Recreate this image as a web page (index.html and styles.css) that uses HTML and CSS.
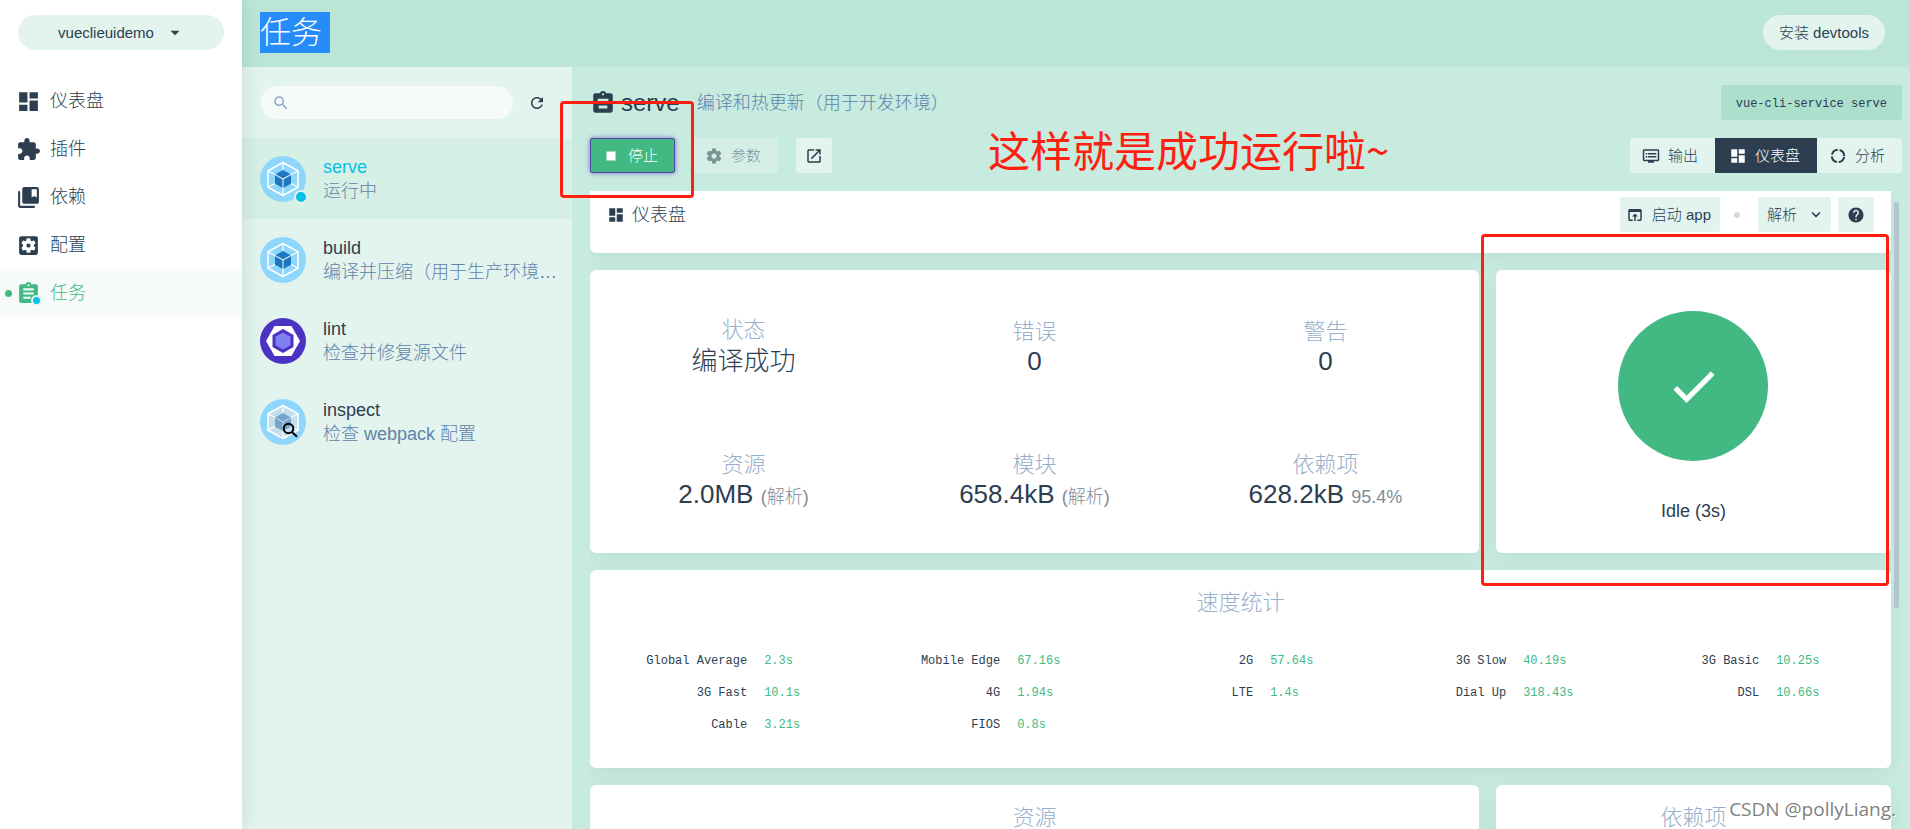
FILE: index.html
```html
<!DOCTYPE html>
<html lang="zh-CN">
<head>
<meta charset="utf-8">
<title>任务 - vueclieuidemo</title>
<link rel="stylesheet" href="styles.css">
</head>
<body>
<svg class="sprite" aria-hidden="true">
  <symbol id="i-dashboard" viewBox="0 0 24 24"><path d="M3 13h8V3H3v10zm0 8h8v-6H3v6zm10 0h8V11h-8v10zm0-18v6h8V3h-8z"/></symbol>
  <symbol id="i-plugin" viewBox="0 0 24 24"><path d="M20.5 11H19V7c0-1.1-.9-2-2-2h-4V3.5C13 2.12 11.88 1 10.5 1S8 2.12 8 3.5V5H4c-1.1 0-1.99.9-1.99 2v3.8H3.5c1.49 0 2.7 1.21 2.7 2.7s-1.21 2.7-2.7 2.7H2V20c0 1.1.9 2 2 2h3.8v-1.5c0-1.49 1.21-2.7 2.7-2.7 1.49 0 2.7 1.21 2.7 2.7V22H17c1.1 0 2-.9 2-2v-4h1.5c1.38 0 2.5-1.12 2.5-2.5S21.88 11 20.5 11z"/></symbol>
  <symbol id="i-deps" viewBox="0 0 24 24"><path d="M4 6H2v14c0 1.1.9 2 2 2h14v-2H4V6z"/><path d="M20 2H8c-1.1 0-2 .9-2 2v12c0 1.1.9 2 2 2h12c1.1 0 2-.9 2-2V4c0-1.1-.9-2-2-2zm0 10l-2.5-1.5L15 12V4h5v8z"/></symbol>
  <symbol id="i-config" viewBox="0 0 24 24"><path d="M12 10c-1.1 0-2 .9-2 2s.9 2 2 2 2-.9 2-2-.9-2-2-2zm7-7H5c-1.11 0-2 .9-2 2v14c0 1.1.89 2 2 2h14c1.11 0 2-.9 2-2V5c0-1.1-.89-2-2-2zm-1.75 9c0 .23-.02.46-.05.68l1.48 1.16c.13.11.17.3.08.45l-1.4 2.42c-.09.15-.27.21-.43.15l-1.74-.7c-.36.28-.76.51-1.18.69l-.26 1.85c-.03.17-.18.3-.35.3h-2.8c-.17 0-.32-.13-.35-.29l-.26-1.85c-.43-.18-.82-.41-1.18-.69l-1.74.7c-.16.06-.34 0-.43-.15l-1.4-2.42c-.09-.15-.05-.34.08-.45l1.48-1.16c-.03-.23-.05-.46-.05-.69 0-.23.02-.46.05-.68l-1.48-1.16c-.13-.11-.17-.3-.08-.45l1.4-2.42c.09-.15.27-.21.43-.15l1.74.7c.36-.28.76-.51 1.18-.69l.26-1.85c.03-.17.18-.3.35-.3h2.8c.17 0 .32.13.35.29l.26 1.85c.43.18.82.41 1.18.69l1.74-.7c.16-.06.34 0 .43.15l1.4 2.42c.09.15.05.34-.08.45l-1.48 1.16c.03.23.05.46.05.69z"/></symbol>
  <symbol id="i-task" viewBox="0 0 24 24"><path d="M19 3h-4.18C14.4 1.84 13.3 1 12 1c-1.3 0-2.4.84-2.82 2H5c-1.1 0-2 .9-2 2v14c0 1.1.9 2 2 2h14c1.1 0 2-.9 2-2V5c0-1.1-.9-2-2-2zm-7 0c.55 0 1 .45 1 1s-.45 1-1 1-1-.45-1-1 .45-1 1-1zm2 14H7v-2h7v2zm3-4H7v-2h10v2zm0-4H7V7h10v2z"/></symbol>
  <symbol id="i-tasktitle" viewBox="0 0 24 24"><path d="M19 3h-4.18C14.4 1.84 13.3 1 12 1c-1.3 0-2.4.84-2.82 2H5c-1.1 0-2 .9-2 2v14c0 1.1.9 2 2 2h14c1.1 0 2-.9 2-2V5c0-1.1-.9-2-2-2zm-7 0c.55 0 1 .45 1 1s-.45 1-1 1-1-.45-1-1 .45-1 1-1zm4 14H8v-2.6h8V17zm1-6.5H7V8h10v2.5z"/></symbol>
  <symbol id="i-gear" viewBox="0 0 24 24"><path d="M19.43 12.98c.04-.32.07-.64.07-.98s-.03-.66-.07-.98l2.11-1.65c.19-.15.24-.42.12-.64l-2-3.46c-.12-.22-.39-.3-.61-.22l-2.49 1c-.52-.4-1.08-.73-1.69-.98l-.38-2.65C14.46 2.18 14.25 2 14 2h-4c-.25 0-.46.18-.49.42l-.38 2.65c-.61.25-1.17.59-1.69.98l-2.49-1c-.23-.09-.49 0-.61.22l-2 3.46c-.13.22-.07.49.12.64l2.11 1.65c-.04.32-.07.65-.07.98s.03.66.07.98l-2.11 1.65c-.19.15-.24.42-.12.64l2 3.46c.12.22.39.3.61.22l2.49-1c.52.4 1.08.73 1.69.98l.38 2.65c.03.24.24.42.49.42h4c.25 0 .46-.18.49-.42l.38-2.65c.61-.25 1.17-.59 1.69-.98l2.49 1c.23.09.49 0 .61-.22l2-3.46c.12-.22.07-.49-.12-.64l-2.11-1.65zM12 15.5c-1.93 0-3.5-1.57-3.5-3.5s1.57-3.5 3.5-3.5 3.5 1.57 3.5 3.5-1.57 3.5-3.5 3.5z"/></symbol>
  <symbol id="i-stop" viewBox="0 0 24 24"><path d="M6 6h12v12H6z"/></symbol>
  <symbol id="i-open" viewBox="0 0 24 24"><path d="M19 19H5V5h7V3H5c-1.11 0-2 .9-2 2v14c0 1.1.89 2 2 2h14c1.1 0 2-.9 2-2v-7h-2v7zM14 3v2h3.59l-9.83 9.83 1.41 1.41L19 6.41V10h2V3h-7z"/></symbol>
  <symbol id="i-output" viewBox="0 0 24 24"><path d="M21 3H3c-1.1 0-2 .9-2 2v12c0 1.1.9 2 2 2h5v2h8v-2h5c1.1 0 1.99-.9 1.99-2L23 5c0-1.1-.9-2-2-2zm0 14H3V5h18v12zm-2-9H8v2h11V8zm0 4H8v2h11v-2zM7 8H5v2h2V8zm0 4H5v2h2v-2z"/></symbol>
  <symbol id="i-analyze" viewBox="0 0 24 24"><circle cx="12" cy="12" r="8.2" fill="none" stroke="currentColor" stroke-width="2.7" stroke-dasharray="10.4 2.48" stroke-dashoffset="-1.24"/></symbol>
  <symbol id="i-browser" viewBox="0 0 24 24"><path d="M19 4H5c-1.11 0-2 .9-2 2v12c0 1.1.89 2 2 2h4v-2H5V8h14v10h-4v2h4c1.1 0 2-.9 2-2V6c0-1.1-.89-2-2-2zm-7 6l-4 4h3v6h2v-6h3l-4-4z"/></symbol>
  <symbol id="i-help" viewBox="0 0 24 24"><path d="M12 2C6.48 2 2 6.48 2 12s4.48 10 10 10 10-4.48 10-10S17.52 2 12 2zm1 17h-2v-2h2v2zm2.07-7.75l-.9.92C13.45 12.9 13 13.5 13 15h-2v-.5c0-1.1.45-2.1 1.17-2.83l1.24-1.26c.37-.36.59-.86.59-1.41 0-1.1-.9-2-2-2s-2 .9-2 2H8c0-2.21 1.79-4 4-4s4 1.79 4 4c0 .88-.36 1.68-.93 2.25z"/></symbol>
  <symbol id="i-chevron" viewBox="0 0 24 24"><path d="M7.41 7.84L12 12.42l4.59-4.58L18 9.25l-6 6-6-6z"/></symbol>
  <symbol id="i-caret" viewBox="0 0 24 24"><path d="M6 9l6 6 6-6z"/></symbol>
  <symbol id="i-search" viewBox="0 0 24 24"><path d="M15.5 14h-.79l-.28-.27C15.41 12.59 16 11.11 16 9.5 16 5.91 13.09 3 9.5 3S3 5.91 3 9.5 5.91 16 9.5 16c1.61 0 3.09-.59 4.23-1.57l.27.28v.79l5 4.99L20.49 19l-4.99-5zm-6 0C7.01 14 5 11.99 5 9.5S7.01 5 9.5 5 14 7.01 14 9.5 11.99 14 9.5 14z"/></symbol>
  <symbol id="i-refresh" viewBox="0 0 24 24"><path d="M17.65 6.35C16.2 4.9 14.21 4 12 4c-4.42 0-7.99 3.58-7.99 8s3.57 8 7.99 8c3.73 0 6.84-2.55 7.73-6h-2.08c-.82 2.33-3.04 4-5.65 4-3.31 0-6-2.69-6-6s2.69-6 6-6c1.66 0 3.14.69 4.22 1.78L13 11h7V4l-2.35 2.35z"/></symbol>
  <symbol id="i-check" viewBox="0 0 24 24"><path stroke="currentColor" stroke-width=".35" d="M9 16.17L4.83 12l-1.42 1.41L9 19 21 7l-1.41-1.41z"/></symbol>
  <symbol id="l-webpack" viewBox="0 0 46 46">
    <circle cx="23" cy="23" r="23" fill="#8ed6fb"/>
    <g fill="none" stroke="#fff">
      <path stroke-width="1.6" d="M23 6.5l15 8.2v16.6L23 39.5 8 31.3V14.7z"/>
      <path stroke-width="1.2" d="M23 6.5V14M38 14.7L31 18.5M38 31.3L31 27.5M23 39.5V32M8 31.3L15 27.5M8 14.7L15 18.5"/>
    </g>
    <path fill="#1c78c0" d="M23 14l8 4.5v9.2L23 32l-8-4.3v-9.2z"/>
    <path fill="none" stroke="#d5ecf9" stroke-width="1.1" d="M15 18.5l8 4.5 8-4.5M23 23v9"/>
  </symbol>
  <symbol id="l-eslint" viewBox="0 0 46 46">
    <circle cx="23" cy="23" r="23" fill="#4b32c3"/>
    <path fill="#fff" d="M14.5 8h17L40 23l-8.5 15h-17L6 23z"/>
    <path fill="#4b32c3" d="M23 11l10.5 6v12L23 35l-10.5-6V17z"/>
    <path fill="#8080f2" d="M23 14.5l7.5 4.2v8.6L23 31.5l-7.5-4.2v-8.6z"/>
  </symbol>
  <symbol id="l-inspect" viewBox="0 0 46 46">
    <circle cx="23" cy="23" r="23" fill="#8ed6fb"/>
    <path fill="#c4dfec" stroke="#fff" stroke-width="1.6" d="M23 6.5l15 8.2v16.6L23 39.5 8 31.3V14.7z"/>
    <path fill="none" stroke="#fff" stroke-width="1.2" d="M23 6.5V14M38 14.7L31 18.5M38 31.3L31 27.5M23 39.5V32M8 31.3L15 27.5M8 14.7L15 18.5"/>
    <path fill="#76a3c8" d="M23 14l8 4.5v9.2L23 32l-8-4.3v-9.2z"/>
    <path fill="none" stroke="#c4dfec" d="M15 18.5l8 4.5 8-4.5M23 23v9"/>
    <g fill="none" stroke="#000" stroke-width="2"><circle cx="28.5" cy="29.5" r="4.8"/><path d="M32 33l5 4.8"/></g>
  </symbol>
</svg>

<div class="app">
  <aside class="sidebar">
    <button class="pill project">vueclieuidemo <svg class="icon s18"><use href="#i-caret"/></svg></button>
    <nav class="nav">
      <a href="#" class="nav-item"><svg class="icon s24"><use href="#i-dashboard"/></svg>仪表盘</a>
      <a href="#" class="nav-item"><svg class="icon s24"><use href="#i-plugin"/></svg>插件</a>
      <a href="#" class="nav-item"><svg class="icon s24"><use href="#i-deps"/></svg>依赖</a>
      <a href="#" class="nav-item"><svg class="icon s24"><use href="#i-config"/></svg>配置</a>
      <a href="#" class="nav-item active"><span class="nav-icon"><svg class="icon s24"><use href="#i-task"/></svg><i class="badge small"></i></span>任务</a>
    </nav>
  </aside>

  <div class="page">
    <header class="topbar">
      <h1 class="page-title"><span class="selected-text">任务</span></h1>
      <button class="pill">安装 devtools</button>
    </header>
    <div class="body">
      <section class="tasks">
        <div class="search-row">
          <label class="search"><svg class="icon s18"><use href="#i-search"/></svg><input type="text" aria-label="搜索任务"></label>
          <button class="refresh" aria-label="刷新"><svg class="icon s18"><use href="#i-refresh"/></svg></button>
        </div>
        <a href="#" class="task selected"><span class="logo"><svg><use href="#l-webpack"/></svg><i class="badge"></i></span><span class="task-text"><b>serve</b><span>运行中</span></span></a>
        <a href="#" class="task"><span class="logo"><svg><use href="#l-webpack"/></svg></span><span class="task-text"><b>build</b><span>编译并压缩（用于生产环境…</span></span></a>
        <a href="#" class="task"><span class="logo"><svg><use href="#l-eslint"/></svg></span><span class="task-text"><b>lint</b><span>检查并修复源文件</span></span></a>
        <a href="#" class="task"><span class="logo"><svg><use href="#l-inspect"/></svg></span><span class="task-text"><b>inspect</b><span>检查 webpack 配置</span></span></a>
      </section>

      <main class="content">
        <div class="task-head">
          <svg class="icon s26"><use href="#i-tasktitle"/></svg>
          <h2>serve</h2>
          <span class="desc">编译和热更新（用于开发环境）</span>
          <code class="command">vue-cli-service serve</code>
        </div>
        <div class="toolbar">
          <button class="btn stop"><svg class="icon s18"><use href="#i-stop"/></svg>停止</button>
          <button class="btn" disabled><svg class="icon s18"><use href="#i-gear"/></svg>参数</button>
          <button class="btn square" aria-label="打开"><svg class="icon s18"><use href="#i-open"/></svg></button>
          <div class="tabs">
            <button class="btn"><svg class="icon s18"><use href="#i-output"/></svg>输出</button>
            <button class="btn current"><svg class="icon s18"><use href="#i-dashboard"/></svg>仪表盘</button>
            <button class="btn"><svg class="icon s18"><use href="#i-analyze"/></svg>分析</button>
          </div>
        </div>

        <div class="scroller">
          <div class="dashboard">
            <div class="dash-bar">
              <svg class="icon s18"><use href="#i-dashboard"/></svg>
              <h3>仪表盘</h3>
              <button class="btn launch"><svg class="icon s18"><use href="#i-browser"/></svg>启动 app</button>
              <i class="separator"></i>
              <button class="btn dropdown">解析<svg class="icon s18"><use href="#i-chevron"/></svg></button>
              <button class="btn square help" aria-label="帮助"><svg class="icon s18"><use href="#i-help"/></svg></button>
            </div>
            <section class="card stats">
              <div class="stat"><h4>状态</h4><p class="tall">编译成功</p></div>
              <div class="stat"><h4>错误</h4><p>0</p></div>
              <div class="stat"><h4>警告</h4><p>0</p></div>
              <div class="stat"><h4>资源</h4><p>2.0MB <small>(解析)</small></p></div>
              <div class="stat"><h4>模块</h4><p>658.4kB <small>(解析)</small></p></div>
              <div class="stat"><h4>依赖项</h4><p>628.2kB <small>95.4%</small></p></div>
            </section>
            <section class="card progress">
              <div class="disc"><svg class="icon"><use href="#i-check"/></svg></div>
              <p>Idle (3s)</p>
            </section>
            <section class="card wide">
              <h4>速度统计</h4>
              <dl class="speeds">
                <div><dt>Global Average</dt><dd>2.3s</dd></div>
                <div><dt>Mobile Edge</dt><dd>67.16s</dd></div>
                <div><dt>2G</dt><dd>57.64s</dd></div>
                <div><dt>3G Slow</dt><dd>40.19s</dd></div>
                <div><dt>3G Basic</dt><dd>10.25s</dd></div>
                <div><dt>3G Fast</dt><dd>10.1s</dd></div>
                <div><dt>4G</dt><dd>1.94s</dd></div>
                <div><dt>LTE</dt><dd>1.4s</dd></div>
                <div><dt>Dial Up</dt><dd>318.43s</dd></div>
                <div><dt>DSL</dt><dd>10.66s</dd></div>
                <div><dt>Cable</dt><dd>3.21s</dd></div>
                <div><dt>FIOS</dt><dd>0.8s</dd></div>
              </dl>
            </section>
            <section class="card list"><h4>资源</h4></section>
            <section class="card list"><h4>依赖项</h4></section>
          </div>
          <i class="scroll-thumb"></i>
        </div>
      </main>
    </div>
  </div>

  <div class="mark mark-stop"></div>
  <div class="mark mark-idle"></div>
  <p class="note">这样就是成功运行啦~</p>
  <p class="watermark">CSDN @pollyLiang.</p>
</div>
</body>
</html>
```
FILE: styles.css
```css
* { box-sizing: border-box; }

body, h1, h2, h3, h4, p, dl, dd { margin: 0; font-weight: 300; }

body {
  color: #2c3e50;
  font-family: "Liberation Sans", "Noto Sans CJK SC", sans-serif;
  font-size: 18px;
  line-height: 24px;
}

a { color: inherit; text-decoration: none; }
button, input { font: inherit; color: inherit; border: 0; padding: 0; }

.sprite { position: absolute; width: 0; height: 0; }
.icon { display: block; flex: none; fill: currentColor; }
.s18 { width: 18px; height: 18px; }
.s24 { width: 25px; height: 25px; }
.s26 { width: 26px; height: 26px; }

.app {
  position: relative;
  display: flex;
  height: 100vh;
  overflow: hidden;
  background: #c7ebdf;
}

/* Sidebar */
.sidebar {
  position: relative;
  z-index: 1;
  flex: none;
  width: 242px;
  padding-top: 15px;
  background: #fff;
  box-shadow: 0 0 20px rgba(0, 0, 0, .12);
}

.pill {
  height: 35px;
  padding: 0 16px;
  border-radius: 18px;
  background: #e3f4ee;
  font-size: 15px;
}

.project {
  display: flex;
  align-items: center;
  justify-content: center;
  gap: 12px;
  width: 206px;
  margin: 0 18px 27px;
}

.nav-item {
  position: relative;
  display: flex;
  align-items: center;
  gap: 9px;
  height: 48px;
  padding-left: 16px;
}
.nav-item.active { background: #f6fbfa; color: #42b983; }
.nav-item.active::before {
  content: "";
  position: absolute;
  left: 5px;
  width: 7px;
  height: 7px;
  border-radius: 50%;
  background: #42b983;
}
.nav-icon { position: relative; }

.badge {
  position: absolute;
  right: -2px;
  bottom: -2px;
  width: 14px;
  height: 14px;
  border: 2px solid #e3f4ee;
  border-radius: 50%;
  background: #03c2e6;
}
.badge.small { width: 11px; height: 11px; right: -1px; bottom: 0; }

/* Top bar */
.page { flex: 1; min-width: 0; display: flex; flex-direction: column; }
.topbar {
  flex: none;
  display: flex;
  align-items: center;
  justify-content: space-between;
  height: 67px;
  padding: 0 25px 2px 18px;
  background: #bbe6d6;
}
.page-title { font-size: 31px; line-height: 41px; }
.selected-text {
  display: block;
  padding-right: 8px;
  background: #268bfb;
  color: #fff;
}
.body { flex: 1; min-height: 0; display: flex; }

/* Task list */
.tasks { flex: none; width: 330px; background: #e3f4ee; }
.search-row {
  display: flex;
  align-items: center;
  gap: 15px;
  height: 71px;
  padding: 0 26px 0 19px;
}
.search {
  flex: 1;
  min-width: 0;
  display: flex;
  align-items: center;
  height: 33px;
  padding: 0 11px;
  border-radius: 17px;
  background: #f6fbfa;
  color: #8ba7c7;
}
.search input { flex: 1; min-width: 0; background: none; outline: 0; }
.refresh { background: none; }

.task {
  display: flex;
  align-items: center;
  gap: 17px;
  height: 81px;
  padding: 0 12px 0 18px;
}
.task.selected { background: #d7f0e6; }
.task.selected b { color: #03c2e6; }
.logo { position: relative; flex: none; width: 46px; height: 46px; }
.logo svg { display: block; width: 46px; height: 46px; }
.task-text { flex: 1; min-width: 0; }
.task-text b, .task-text span { display: block; font-weight: 300; }
.task-text span {
  overflow: hidden;
  white-space: nowrap;
  text-overflow: ellipsis;
  color: #6083ab;
}

/* Task details */
.content {
  flex: 1;
  min-width: 0;
  display: flex;
  flex-direction: column;
  gap: 18px;
  padding: 18px 8px 0 18px;
}
.task-head { display: flex; align-items: center; height: 35px; }
.task-head h2 { margin: 0 17px 0 5px; font-size: 24px; }
.desc { color: #6083ab; }
.command {
  margin-left: auto;
  padding: 3px 15px 0;
  border-radius: 3px;
  background: #addfcd;
  font: 12px/32px "Liberation Mono", monospace;
}

.toolbar { display: flex; gap: 18px; }
.btn {
  display: flex;
  align-items: center;
  gap: 8px;
  height: 35px;
  padding: 0 17px 0 12px;
  border-radius: 3px;
  background: #e3f4ee;
  font-size: 15px;
}
.btn.square { width: 36px; padding: 0; justify-content: center; }
.btn:disabled { opacity: .5; }
.btn.stop {
  background: #42b983;
  color: #fff;
  box-shadow: inset 0 0 0 1px #5546a8, 0 0 5px #7a68c8;
}
.tabs { display: flex; margin-left: auto; overflow: hidden; border-radius: 3px; }
.tabs .btn { border-radius: 0; }
.tabs .current { padding-left: 14px; background: #2c3e50; color: #fff; }

/* Dashboard */
.scroller {
  position: relative;
  flex: 1;
  min-height: 0;
  overflow: hidden;
  padding-right: 11px;
}
.scroll-thumb {
  position: absolute;
  top: 11px;
  right: 3px;
  width: 5px;
  height: 406px;
  border-radius: 3px;
  background: #b3c6d0;
}
.dashboard { display: grid; grid-template-columns: 9fr 4fr; gap: 17px; }
.dash-bar, .wide { grid-column: span 2; }
.dash-bar, .card {
  background: #fff;
  border-radius: 6px;
  box-shadow: 0 5px 20px rgba(0, 0, 0, .05);
}
.dash-bar {
  display: flex;
  align-items: center;
  height: 62px;
  padding: 0 17px 15px;
  border-radius: 0 0 6px 6px;
}
.dash-bar h3 { margin: 0 auto 0 7px; font-size: 18px; }
.launch { padding: 0 9px 0 6px; }
.separator { width: 6px; height: 6px; margin: 0 18px 0 14px; border-radius: 50%; background: #d5d8dc; }
.dropdown { padding: 0 6px 0 9px; gap: 10px; }
.help { margin-left: 7px; }

.card h4 { color: #98b0cb; font-size: 22px; line-height: 28px; text-align: center; }
.stats { display: grid; grid-template-columns: repeat(3, 1fr); padding: 10px 8px 7px; }
.stat {
  display: flex;
  flex-direction: column;
  justify-content: center;
  height: 133px;
  text-align: center;
}
.stat p { font-size: 26px; line-height: 30px; }
.stat .tall { line-height: 34px; }
.stat small { font-size: 18px; line-height: 24px; color: #808b96; }

.progress {
  display: flex;
  flex-direction: column;
  align-items: center;
  gap: 38px;
  padding-top: 41px;
}
.disc {
  display: flex;
  align-items: center;
  justify-content: center;
  width: 150px;
  height: 150px;
  border-radius: 50%;
  background: #42b983;
  color: #fff;
}
.disc .icon { width: 55px; height: 55px; }

.wide { padding: 19px 18px 27px; }
.speeds {
  display: grid;
  grid-template-columns: repeat(5, 1fr);
  margin-top: 28px;
  font: 12px/32px "Liberation Mono", monospace;
}
.speeds div { display: flex; }
.speeds dt { width: 55%; text-align: right; }
.speeds dd { margin-left: 17px; color: #42b983; }
.list { height: 300px; padding-top: 19px; }

/* Annotations over the window */
.mark {
  position: absolute;
  z-index: 2;
  border: 3px solid #ff1e10;
  border-radius: 4px;
}
.mark-stop { left: 560px; top: 101px; width: 134px; height: 97px; }
.mark-idle { right: 21px; top: 234px; width: 408px; height: 352px; }
.note {
  position: absolute;
  z-index: 2;
  left: 988px;
  top: 119px;
  color: #ff1e10;
  font-family: "Noto Sans CJK SC", sans-serif;
  font-size: 42px;
  font-weight: 400;
  line-height: 60px;
}
.watermark {
  position: absolute;
  z-index: 2;
  right: 14px;
  bottom: 8px;
  color: #808080;
  font-family: "Open Sans", "Noto Sans", sans-serif;
  font-size: 19px;
  font-weight: 400;
  text-shadow: 1px 1px 0 #fff;
}
```
